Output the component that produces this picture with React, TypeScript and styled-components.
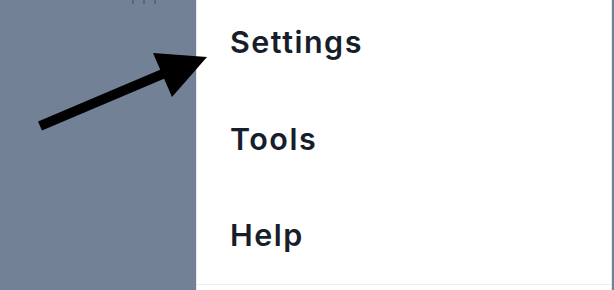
import React from "react";
import styled, { createGlobalStyle } from "styled-components";

const GlobalStyle = createGlobalStyle`
	html, body {
		margin: 0;
		padding: 0;
		background: #728196;
		height: 290px;
		overflow: hidden;
	}
	#root {
		height: 290px;
	}
`;

const Page = styled.div`
	position: relative;
	display: flex;
	flex-direction: row;
	width: 614px;
	height: 290px;
	font-family: Inter, "Noto Sans", sans-serif;
`;

const Backdrop = styled.div`
	width: 196px;
	flex-shrink: 0;
	display: flex;
	justify-content: flex-start;
	padding-left: 132px;
	box-sizing: border-box;
	gap: 9px;
`;

const Tick = styled.span`
	display: block;
	width: 2px;
	height: 4px;
	background: #5a677a;
`;

const Menu = styled.div`
	width: 416px;
	flex-shrink: 0;
	background: #ffffff;
	border-left: 1px solid #e2e8f0;
	border-right: 1px solid #e2e8f0;
	box-sizing: border-box;
	overflow: hidden;
`;

const List = styled.ul`
	list-style: none;
	margin: -6px 0 0 0;
	padding: 0;
`;

const Item = styled.li<{ $divider?: boolean }>`
	height: 96.5px;
	line-height: 96.5px;
	padding-left: 33px;
	font-size: 30.5px;
	font-weight: 560;
	color: #171e2b;
	letter-spacing: 1.5px;
	border-bottom: ${(p) => (p.$divider ? "1.5px solid #edf0f3" : "none")};
`;

const Arrow = styled.svg`
	position: absolute;
	left: 0;
	top: 0;
	pointer-events: none;
`;

export default function App() {
	const items = ["Settings", "Tools", "Help"];
	return (
		<>
			<GlobalStyle />
			<Page>
				<Backdrop>
					<Tick />
					<Tick />
					<Tick />
				</Backdrop>
				<Menu>
					<List>
						{items.map((label, i) => (
							<Item key={label} $divider={i === items.length - 1}>
								{label}
							</Item>
						))}
					</List>
				</Menu>
				<Arrow width="614" height="290" viewBox="0 0 614 290">
					<line x1="40" y1="126" x2="165" y2="73" stroke="#000" strokeWidth="10" />
					<polygon points="153,53 207,57 172,97" fill="#000" />
				</Arrow>
			</Page>
		</>
	);
}
